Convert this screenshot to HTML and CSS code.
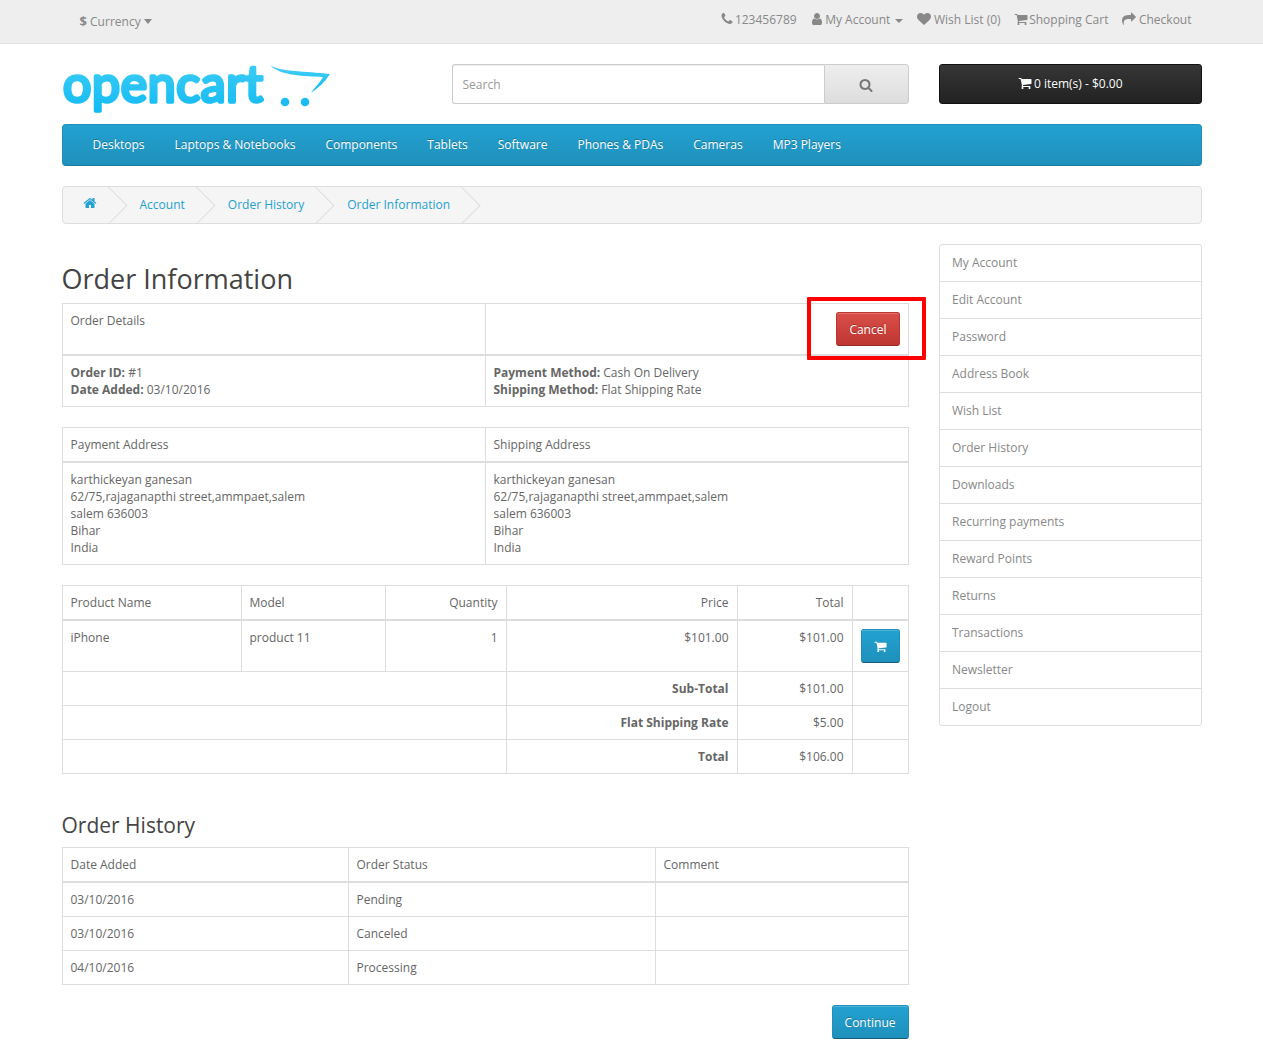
FILE: index.html
```html
<!DOCTYPE html>
<html lang="en">
<head>
  <meta charset="UTF-8">
  <meta name="viewport" content="width=device-width, initial-scale=1.0">
  <title>Order Information</title>
  <link rel="stylesheet" href="styles.css">
</head>
<body>
  <svg class="sprite" xmlns="http://www.w3.org/2000/svg">
    <symbol id="i-home" viewBox="0 0 1792 1792"><path d="M1472 992v480q0 26-19 45t-45 19h-384v-384h-256v384h-384q-26 0-45-19t-19-45v-480q0-1 .5-3t.5-3l575-474 575 474q1 2 1 6zm223-69l-62 74q-8 9-21 11h-3q-13 0-21-7l-692-577-692 577q-12 8-24 7-13-2-21-11l-62-74q-8-10-7-23.5t11-21.5l719-599q32-26 76-26t76 26l244 204v-195q0-14 9-23t23-9h192q14 0 23 9t9 23v408l219 182q10 8 11 21.5t-7 23.5z"/></symbol>
    <symbol id="i-cart" viewBox="0 0 1792 1792"><path d="M704 1536q0 52-38 90t-90 38-90-38-38-90 38-90 90-38 90 38 38 90zm896 0q0 52-38 90t-90 38-90-38-38-90 38-90 90-38 90 38 38 90zm128-1088v512q0 24-16.5 42.5t-40.5 21.5l-1044 122q13 60 13 70 0 16-24 64h920q26 0 45 19t19 45-19 45-45 19h-1024q-26 0-45-19t-19-45q0-11 8-31.5t16-36 21.5-40 15.5-29.5l-177-823h-204q-26 0-45-19t-19-45 19-45 45-19h256q16 0 28.5 6.5t19.5 15.5 13 24.5 8 26 5.5 29.5 4.5 26h1201q26 0 45 19t19 45z"/></symbol>
    <symbol id="i-search" viewBox="0 0 1792 1792"><path d="M1216 832q0-185-131.5-316.5t-316.5-131.5-316.5 131.5-131.5 316.5 131.5 316.5 316.5 131.5 316.5-131.5 131.5-316.5zm512 832q0 52-38 90t-90 38q-54 0-90-38l-343-342q-179 124-399 124-143 0-273.5-55.5t-225-150-150-225-55.5-273.5 55.5-273.5 150-225 225-150 273.5-55.5 273.5 55.5 225 150 150 225 55.5 273.5q0 220-124 399l343 343q37 37 37 90z"/></symbol>
    <symbol id="i-heart" viewBox="0 0 1792 1792"><path d="M896 1664q-26 0-44-18l-624-602q-10-8-27.5-26t-55.5-65.5-68-97.5-53.5-121-23.5-138q0-220 127-344t351-124q62 0 126.5 21.5t120 58 95.5 68.5 76 68q36-36 76-68t95.5-68.5 120-58 126.5-21.5q224 0 351 124t127 344q0 221-229 450l-623 600q-18 18-44 18z"/></symbol>
    <symbol id="i-user" viewBox="0 0 1792 1792"><path d="M1536 1399q0 109-62.5 187t-150.5 78h-854q-88 0-150.5-78t-62.5-187q0-85 8.5-160.5t31.5-152 58.5-131 94-89 134.5-34.5q131 128 313 128t313-128q76 0 134.5 34.5t94 89 58.5 131 31.5 152 8.5 160.5zm-256-887q0 159-112.5 271.5t-271.5 112.5-271.5-112.5-112.5-271.5 112.5-271.5 271.5-112.5 271.5 112.5 112.5 271.5z"/></symbol>
    <symbol id="i-phone" viewBox="0 0 1792 1792"><path d="M1600 1240q0 27-10 70.5t-21 68.5q-21 50-122 106-94 51-186 51-27 0-53-3.5t-57.5-12.5-47-14.5-55.5-20.5-49-18q-98-35-175-83-127-79-264-216t-216-264q-48-77-83-175-3-9-18-49t-20.5-55.5-14.5-47-12.5-57.5-3.5-53q0-92 51-186 56-101 106-122 25-11 68.5-21t70.5-10q14 0 21 3 18 6 53 76 11 19 30 54t35 63.5 31 53.5q3 4 17.5 25t21.5 35.5 7 28.5q0 20-28.5 50t-62 55-62 53-28.5 46q0 9 5 22.5t8.5 20.5 14 24 11.5 19q76 137 174 235t235 174q2 1 19 11.5t24 14 20.5 8.5 22.5 5q18 0 46-28.5t53-62 55-62 50-28.5q14 0 28.5 7t35.5 21.5 25 17.5q25 15 53.5 31t63.5 35 54 30q70 35 76 53 3 7 3 21z"/></symbol>
    <symbol id="i-share" viewBox="0 0 1792 1792"><path d="M1792 640q0 26-19 45l-512 512q-19 19-45 19t-45-19-19-45v-256h-224q-98 0-175.5 6t-154 21.5-133 42.5-105.5 69.5-80 101-48.5 138.5-17.5 181q0 55 5 123 0 6 2.5 23.5t2.5 26.5q0 15-8.5 25t-23.5 10q-16 0-28-17-7-9-13-22t-13.5-30-10.5-24q-127-285-127-451 0-199 53-333 162-403 875-403h224v-256q0-26 19-45t45-19 45 19l512 512q19 19 19 45z"/></symbol>
  </svg>

  <!-- Top bar -->
  <nav class="top">
    <div class="container top-inner">
      <a class="currency" href="#"><b>$</b> Currency <span class="caret"></span></a>
      <ul class="top-links">
        <li><svg class="icon"><use href="#i-phone"/></svg>123456789</li>
        <li><svg class="icon"><use href="#i-user"/></svg>My Account <span class="caret small"></span></li>
        <li><svg class="icon wide"><use href="#i-heart"/></svg>Wish List (0)</li>
        <li><svg class="icon"><use href="#i-cart"/></svg>Shopping Cart</li>
        <li><svg class="icon wide"><use href="#i-share"/></svg>Checkout</li>
      </ul>
    </div>
  </nav>

  <div class="container">
    <header class="site-head">
      <a class="logo" href="#">
        <svg width="270" height="50" viewBox="0 0 270 50">
          <defs>
            <linearGradient id="logoBlue" x1="0" y1="0" x2="0" y2="1">
              <stop offset="0" stop-color="#45d0f5"/>
              <stop offset="1" stop-color="#12baf3"/>
            </linearGradient>
          </defs>
          <text class="logo-text" x="1" y="38" textLength="200" lengthAdjust="spacing">opencart</text>
          <path fill="url(#logoBlue)" d="M208 1C218 8 243 7 268 10C263 18 256 24 249 29C254 22 259 17 261 13C243 12 218 12 208 1Z"/>
          <circle cx="223" cy="38" r="4.3" fill="#1abcf3"/>
          <circle cx="243" cy="38" r="4.3" fill="#1abcf3"/>
        </svg>
      </a>
      <div class="search">
        <input class="search-input" type="text" placeholder="Search">
        <button class="search-btn" type="button"><svg class="icon"><use href="#i-search"/></svg></button>
      </div>
      <button class="cart-btn" type="button"><svg class="icon"><use href="#i-cart"/></svg>0 item(s) - $0.00</button>
    </header>

    <nav class="menu">
      <ul>
        <li><a href="#">Desktops</a></li>
        <li><a href="#">Laptops &amp; Notebooks</a></li>
        <li><a href="#">Components</a></li>
        <li><a href="#">Tablets</a></li>
        <li><a href="#">Software</a></li>
        <li><a href="#">Phones &amp; PDAs</a></li>
        <li><a href="#">Cameras</a></li>
        <li><a href="#">MP3 Players</a></li>
      </ul>
    </nav>

    <ul class="breadcrumb">
      <li><a href="#"><svg class="icon home"><use href="#i-home"/></svg></a></li>
      <li><a href="#">Account</a></li>
      <li><a href="#">Order History</a></li>
      <li><a href="#">Order Information</a></li>
    </ul>

    <div class="columns">
      <main>
        <h1>Order Information</h1>

        <table class="table halves">
          <thead>
            <tr>
              <td>Order Details</td>
              <td>
                <div class="cancel-row">
                  <span class="cancel-wrap">
                    <a class="btn btn-danger" href="#">Cancel</a>
                    <span class="highlight"></span>
                  </span>
                </div>
              </td>
            </tr>
          </thead>
          <tbody>
            <tr>
              <td><b>Order ID:</b> #1<br><b>Date Added:</b> 03/10/2016</td>
              <td><b>Payment Method:</b> Cash On Delivery<br><b>Shipping Method:</b> Flat Shipping Rate</td>
            </tr>
          </tbody>
        </table>

        <table class="table halves">
          <thead>
            <tr>
              <td>Payment Address</td>
              <td>Shipping Address</td>
            </tr>
          </thead>
          <tbody>
            <tr>
              <td>karthickeyan ganesan<br>62/75,rajaganapthi street,ammpaet,salem<br>salem 636003<br>Bihar<br>India</td>
              <td>karthickeyan ganesan<br>62/75,rajaganapthi street,ammpaet,salem<br>salem 636003<br>Bihar<br>India</td>
            </tr>
          </tbody>
        </table>

        <table class="table products">
          <colgroup>
            <col class="c-name"><col class="c-model"><col class="c-qty"><col class="c-price"><col class="c-total"><col class="c-action">
          </colgroup>
          <thead>
            <tr>
              <td>Product Name</td>
              <td>Model</td>
              <td class="right">Quantity</td>
              <td class="right">Price</td>
              <td class="right">Total</td>
              <td></td>
            </tr>
          </thead>
          <tbody>
            <tr>
              <td>iPhone</td>
              <td>product 11</td>
              <td class="right">1</td>
              <td class="right">$101.00</td>
              <td class="right">$101.00</td>
              <td class="right"><a class="btn btn-primary" href="#"><svg class="icon"><use href="#i-cart"/></svg></a></td>
            </tr>
          </tbody>
          <tfoot>
            <tr>
              <td colspan="3"></td>
              <td class="right"><b>Sub-Total</b></td>
              <td class="right">$101.00</td>
              <td></td>
            </tr>
            <tr>
              <td colspan="3"></td>
              <td class="right"><b>Flat Shipping Rate</b></td>
              <td class="right">$5.00</td>
              <td></td>
            </tr>
            <tr>
              <td colspan="3"></td>
              <td class="right"><b>Total</b></td>
              <td class="right">$106.00</td>
              <td></td>
            </tr>
          </tfoot>
        </table>

        <h2>Order History</h2>
        <table class="table history">
          <colgroup>
            <col class="c-date"><col class="c-status"><col>
          </colgroup>
          <thead>
            <tr>
              <td>Date Added</td>
              <td>Order Status</td>
              <td>Comment</td>
            </tr>
          </thead>
          <tbody>
            <tr><td>03/10/2016</td><td>Pending</td><td></td></tr>
            <tr><td>03/10/2016</td><td>Canceled</td><td></td></tr>
            <tr><td>04/10/2016</td><td>Processing</td><td></td></tr>
          </tbody>
        </table>

        <div class="buttons">
          <a class="btn btn-primary" href="#">Continue</a>
        </div>
      </main>

      <aside class="side-list">
        <a href="#">My Account</a>
        <a href="#">Edit Account</a>
        <a href="#">Password</a>
        <a href="#">Address Book</a>
        <a href="#">Wish List</a>
        <a href="#">Order History</a>
        <a href="#">Downloads</a>
        <a href="#">Recurring payments</a>
        <a href="#">Reward Points</a>
        <a href="#">Returns</a>
        <a href="#">Transactions</a>
        <a href="#">Newsletter</a>
        <a href="#">Logout</a>
      </aside>
    </div>
  </div>
</body>
</html>
```

FILE: styles.css
```css
* {
    box-sizing: border-box;
}
body {
    margin: 0;
    font-family: "Open Sans", sans-serif;
    font-size: 12px;
    line-height: 20px;
    color: #666;
    background-color: #fff;
}
a {
    color: #23a1d1;
    text-decoration: none;
}
ul {
    list-style: none;
    margin: 0;
    padding: 0;
}
.sprite {
    display: none;
}
.icon {
    width: 14px;
    height: 14px;
    fill: currentColor;
    vertical-align: -2px;
}
.container {
    width: 1170px;
    margin: 0 auto;
    padding: 0 15px;
}

/* top bar */
.top {
    height: 44px;
    margin-bottom: 20px;
    background-color: #eee;
    border-bottom: 1px solid #e2e2e2;
}
.top-inner {
    display: flex;
    justify-content: space-between;
    align-items: center;
    height: 39px;
}
.currency {
    margin: 3px 0 0 18px;
    color: #888;
}
.currency b {
    font-size: 13px;
}
.caret {
    display: inline-block;
    margin-left: 0;
    vertical-align: 2px;
    border-top: 5px solid #888;
    border-left: 4.5px solid transparent;
    border-right: 4.5px solid transparent;
}
.caret.small {
    margin-left: 2px;
    vertical-align: 1px;
    border-top-width: 4px;
    border-left-width: 4px;
    border-right-width: 4px;
}
.top-links {
    display: flex;
    gap: 13.5px;
    margin-right: 10px;
    color: #888;
}
.top-links .icon {
    margin-right: 1px;
}
.top-links .icon.wide {
    margin-right: 3px;
}

/* logo, search, cart */
.site-head {
    display: grid;
    grid-template-columns: 360px 457.5px 262.5px;
    column-gap: 30px;
    height: 40px;
    margin-bottom: 20px;
}
.logo {
    display: block;
    height: 40px;
}
.logo svg {
    display: block;
    overflow: visible;
}
.logo-text {
    font-family: Lato, sans-serif;
    font-weight: 400;
    font-size: 50px;
    fill: url(#logoBlue);
    stroke: url(#logoBlue);
    stroke-width: 3.5px;
    stroke-linejoin: round;
}
.search {
    display: flex;
    height: 40px;
}
.search-input {
    flex: 1;
    min-width: 0;
    padding: 10px;
    border: 1px solid #ccc;
    border-right: none;
    border-radius: 3px 0 0 3px;
    font-family: inherit;
    font-size: 12px;
    color: #666;
    box-shadow: inset 0 1px 1px rgba(0, 0, 0, 0.075);
}
.search-input::placeholder {
    color: #999;
}
.search-btn {
    width: 85px;
    padding: 2px 2px 0 0;
    border: 1px solid #ccc;
    border-radius: 0 3px 3px 0;
    background: linear-gradient(to bottom, #eee, #ddd);
    color: #777;
}
.cart-btn {
    height: 40px;
    padding-bottom: 2px;
    border: 1px solid #111;
    border-radius: 3px;
    background: linear-gradient(to bottom, #363636, #222);
    color: #fff;
    font-family: inherit;
    font-size: 12px;
    text-shadow: 0 -1px 0 rgba(0, 0, 0, 0.25);
}
.cart-btn .icon {
    margin-right: 2px;
}

/* menu */
.menu {
    height: 42px;
    margin-bottom: 20px;
    background: linear-gradient(to bottom, #23a1d1, #1f90bb);
    border: 1px solid #1f90bb;
    border-bottom-color: #1a7ca3;
    border-radius: 4px;
}
.menu ul {
    display: flex;
    padding-left: 15px;
}
.menu a {
    display: block;
    padding: 10px 15px;
    color: #fff;
    text-shadow: 0 -1px 0 rgba(0, 0, 0, 0.25);
}

/* breadcrumb */
.breadcrumb {
    display: flex;
    gap: 3px;
    height: 38px;
    margin-bottom: 20px;
    padding: 8px 0;
    background-color: #f5f5f5;
    border: 1px solid #ddd;
    border-radius: 4px;
}
.breadcrumb li {
    position: relative;
    padding: 0 20px;
}
.breadcrumb li::after {
    content: "";
    position: absolute;
    top: -3px;
    right: -5px;
    width: 26px;
    height: 26px;
    border-right: 1px solid #ddd;
    border-bottom: 1px solid #ddd;
    transform: rotate(-45deg);
}
.breadcrumb .home {
    vertical-align: -1px;
}

/* main layout */
.columns {
    display: grid;
    grid-template-columns: 847.5px 262.5px;
    column-gap: 30px;
    align-items: start;
}
main {
    width: 847px;
}
h1 {
    margin: 0 0 9px;
    padding-top: 20px;
    font-size: 27px;
    font-weight: 400;
    line-height: 30px;
    color: #444;
}
h2 {
    margin: 39px 0 10px;
    font-size: 21px;
    font-weight: 400;
    line-height: 24px;
    color: #444;
}
.table {
    width: 100%;
    margin-bottom: 20px;
    table-layout: fixed;
    border-collapse: collapse;
    line-height: 17px;
}
.table td {
    padding: 8px;
    border: 1px solid #ddd;
    vertical-align: top;
}
.table thead td {
    border-bottom-width: 2px;
}
.table .right {
    text-align: right;
}
.table b {
    font-weight: 700;
}
.c-name { width: 179px; }
.c-model { width: 144px; }
.c-qty { width: 121px; }
.c-price { width: 231px; }
.c-total { width: 115px; }
.c-action { width: 56px; }
.c-date { width: 286px; }
.c-status { width: 307px; }

/* buttons */
.btn {
    display: inline-block;
    padding: 7px 12px 5px;
    border: 1px solid transparent;
    border-radius: 3px;
    color: #fff;
    line-height: 20px;
    text-shadow: 0 -1px 0 rgba(0, 0, 0, 0.25);
    vertical-align: top;
}
.btn-danger {
    background: linear-gradient(to bottom, #da4f49, #bd362f);
    border-color: #bd362f #bd362f #962b26;
    box-shadow: inset 0 1px 0 rgba(255, 255, 255, 0.2);
}
.btn-primary {
    background: linear-gradient(to bottom, #23a1d1, #1f90bb);
    border-color: #1f90bb #1f90bb #145e7a;
    box-shadow: inset 0 1px 0 rgba(255, 255, 255, 0.2);
}
.btn .icon {
    width: 13px;
    height: 13px;
}
.cancel-row {
    display: flex;
    justify-content: flex-end;
}
.cancel-wrap {
    position: relative;
    display: block;
    height: 34px;
}
.highlight {
    position: absolute;
    top: -15px;
    left: -29px;
    right: -26px;
    bottom: -14px;
    border: 4px solid #f00;
    border-radius: 1px;
    pointer-events: none;
}
.buttons {
    display: flex;
    justify-content: flex-end;
}

/* account list */
.side-list {
    display: flex;
    flex-direction: column;
    border: 1px solid #ddd;
    border-radius: 3px;
}
.side-list a {
    padding: 8px 12px;
    border-bottom: 1px solid #ddd;
    color: #888;
}
.side-list a:last-child {
    height: 36px;
    border-bottom: none;
}
```
